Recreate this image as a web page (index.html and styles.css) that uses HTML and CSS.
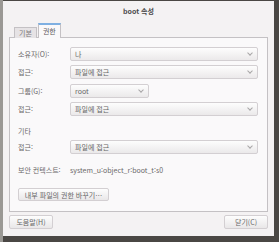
FILE: index.html
```html
<!DOCTYPE html>
<html lang="ko">
<head>
    <meta charset="UTF-8">
    <title>boot 속성</title>
    <link rel="stylesheet" href="styles.css">
</head>
<body>
    <div class="dialog">
        <div class="titlebar">boot 속성</div>

        <div class="notebook">
            <div class="tabs">
                <span class="tab">기본</span>
                <span class="tab active">권한</span>
            </div>

            <div class="page">
                <div class="row">
                    <span class="label">소유자(O):</span>
                    <div class="combo wide"><span>나</span><span class="arrow"></span></div>
                </div>
                <div class="row">
                    <span class="label">접근:</span>
                    <div class="combo wide"><span>파일에 접근</span><span class="arrow"></span></div>
                </div>

                <div class="row gap-top">
                    <span class="label">그룹(G):</span>
                    <div class="combo short"><span>root</span><span class="arrow"></span></div>
                </div>
                <div class="row">
                    <span class="label">접근:</span>
                    <div class="combo wide"><span>파일에 접근</span><span class="arrow"></span></div>
                </div>

                <div class="heading">기타</div>
                <div class="row">
                    <span class="label">접근:</span>
                    <div class="combo wide"><span>파일에 접근</span><span class="arrow"></span></div>
                </div>

                <div class="row context">
                    <span class="label">보안 컨텍스트:</span>
                    <span class="value">system_u:object_r:boot_t:s0</span>
                </div>

                <button class="btn inner">내부 파일의 권한 바꾸기…</button>
            </div>
        </div>

        <div class="actions">
            <button class="btn">도움말(H)</button>
            <button class="btn close">닫기(C)</button>
        </div>
    </div>
</body>
</html>
```

FILE: styles.css
```css
* {
    box-sizing: border-box;
}

body {
    margin: 0;
    width: 279px;
    height: 242px;
    overflow: hidden;
    background: linear-gradient(90deg, #9a9894 0, #9a9894 3px, #4a4744 3px);
    font-family: "Noto Sans CJK KR", "DejaVu Sans", sans-serif;
    font-size: 7px;
    color: #6a6869;
}

.dialog {
    margin: 1px 5px 0 3px;
    height: 235px;
    background: #f4f2f3;
    display: flex;
    flex-direction: column;
}

.titlebar {
    height: 22px;
    padding-top: 5px;
    text-align: center;
    font-weight: bold;
    color: #4a494a;
}

.notebook {
    margin: 0 6px;
}

.tabs {
    display: flex;
    align-items: flex-end;
    padding-left: 5px;
    height: 15px;
    margin-bottom: -1px;
}

.tab {
    height: 11px;
    padding: 0 4px;
    line-height: 10px;
    border: 1px solid #c4c1c4;
    border-bottom: none;
    background: #e6e3e5;
    color: #7a7879;
}

.tab.active {
    height: 15px;
    line-height: 13px;
    margin-left: 1px;
    border-top: 2px solid #7fb0e2;
    background: #faf9fa;
    color: #5a5859;
    position: relative;
    z-index: 1;
}

.page {
    height: 175px;
    border: 1px solid #c4c1c4;
    background: #faf9fa;
    padding: 9px 9px 0 8px;
}

.row {
    display: flex;
    align-items: center;
    margin-bottom: 4px;
}

.row.gap-top {
    margin-top: 5px;
}

.label {
    width: 52px;
    flex-shrink: 0;
}

.combo {
    height: 14px;
    display: flex;
    align-items: center;
    justify-content: space-between;
    padding: 0 5px 0 4px;
    border: 1px solid #d3cfd2;
    border-radius: 2px;
    background: linear-gradient(#fdfdfd, #ebe9ea);
    color: #666;
}

.combo.wide {
    width: 188px;
}

.combo.short {
    width: 79px;
}

.arrow {
    width: 4px;
    height: 4px;
    border-right: 1px solid #a8a6a7;
    border-bottom: 1px solid #a8a6a7;
    transform: rotate(45deg);
    margin-top: -3px;
}

.heading {
    margin: 10px 0 4px;
    height: 10px;
    line-height: 10px;
}

.context {
    margin-top: 11px;
}

.btn {
    font-family: inherit;
    font-size: 7px;
    color: #666;
    height: 14px;
    padding: 0 4px;
    white-space: nowrap;
    border: 1px solid #d3cfd2;
    border-radius: 2px;
    background: linear-gradient(#fdfdfd, #e9e7e8);
}

.btn.inner {
    margin-top: 9px;
    width: 91px;
    height: 13px;
}

.actions {
    display: flex;
    justify-content: space-between;
    padding: 3px 6px 0;
}

.actions .btn {
    width: 44px;
}
```
